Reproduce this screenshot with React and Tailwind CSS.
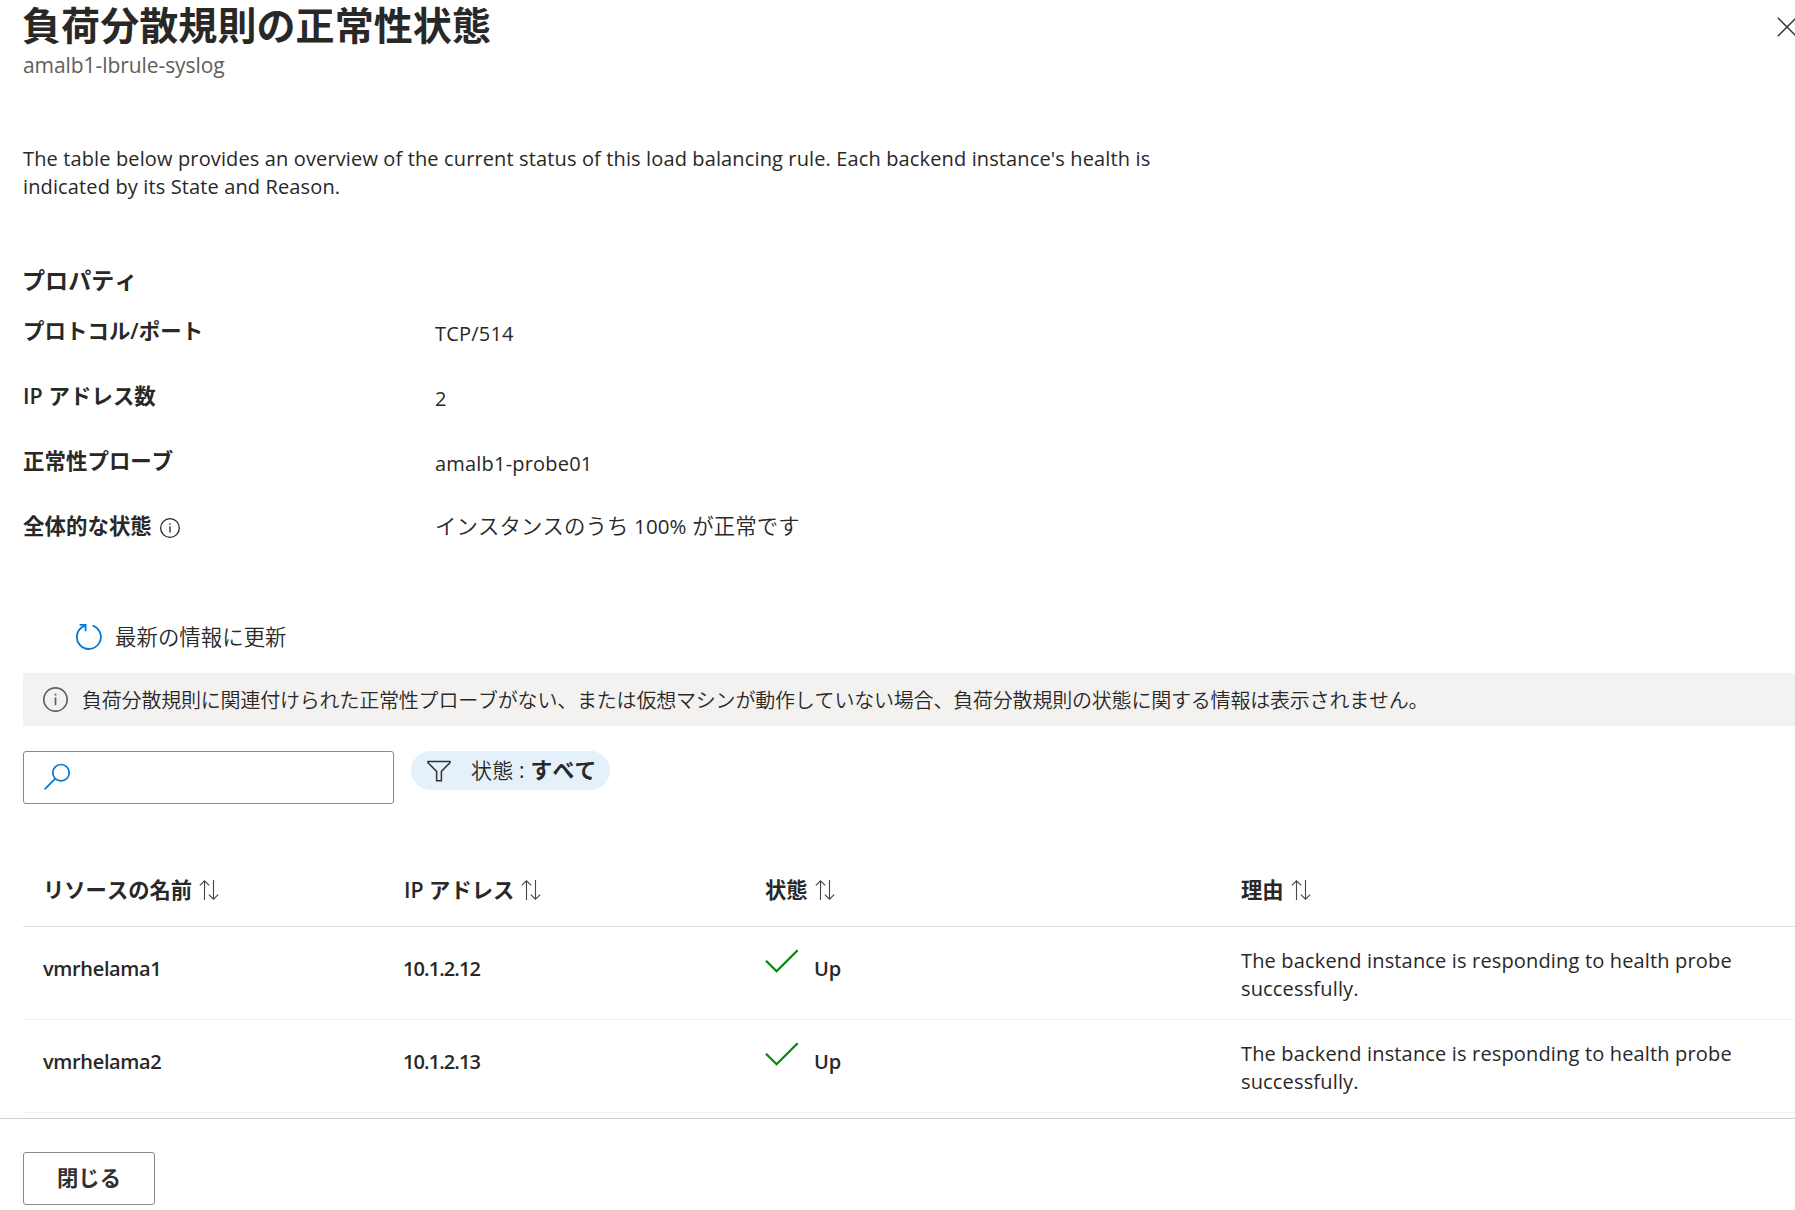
const properties = [
  { label: "プロトコル/ポート", value: "TCP/514" },
  { label: "IP アドレス数", value: "2" },
  { label: "正常性プローブ", value: "amalb1-probe01" },
  {
    label: "全体的な状態",
    value: (
      <>
        インスタンスのうち <span className="text-[20.5px] font-normal">100%</span> が正常です
      </>
    ),
    info: true,
  },
];

const columns = ["リソースの名前", "IP アドレス", "状態", "理由"];

const instances = [
  {
    name: "vmrhelama1",
    ip: "10.1.2.12",
    state: "Up",
    reason: "The backend instance is responding to health probe successfully.",
  },
  {
    name: "vmrhelama2",
    ip: "10.1.2.13",
    state: "Up",
    reason: "The backend instance is responding to health probe successfully.",
  },
];

function CloseIcon() {
  return (
    <svg className="w-5 h-5 shrink-0" viewBox="0 0 20 20" fill="none" stroke="#323130" strokeWidth="1.4">
      <path d="M0.8 0.8l18.4 18.4M19.2 0.8L0.8 19.2" />
    </svg>
  );
}

function InfoIcon({ className }) {
  return (
    <svg className={className} viewBox="0 0 24 24" fill="none" stroke="currentColor" strokeWidth="1.6">
      <circle cx="12" cy="12" r="11.2" />
      <path d="M12 10v7.5" />
      <path d="M12 6.4v1.8" />
    </svg>
  );
}

function RefreshIcon() {
  return (
    <svg className="w-7 h-7 shrink-0" viewBox="0 0 28 28" fill="none" stroke="#0078d4" strokeWidth="1.8">
      <path d="M17.6 2.6A12 12 0 1 1 8.6 3.2" />
      <path d="M4.6 1.9h6v6.4" />
      <path d="M10.2 2.2L8.2 3.8" />
    </svg>
  );
}

function SearchIcon() {
  return (
    <svg className="w-7 h-7" viewBox="0 0 28 28" fill="none" stroke="#0078d4" strokeWidth="1.7">
      <circle cx="18" cy="9.7" r="8.2" />
      <path d="M12.2 15.6L1.6 26.4" />
    </svg>
  );
}

function FilterIcon() {
  return (
    <svg className="w-6 h-[22px] shrink-0" viewBox="0 0 24 22" fill="none" stroke="#323130" strokeWidth="1.5">
      <path d="M1 1.4h22v1.4l-8.6 8.6v9.4H9.6v-9.4L1 2.8z" />
    </svg>
  );
}

function SortIcon() {
  return (
    <svg className="w-5 h-5 shrink-0" viewBox="0 0 20 20" fill="none" stroke="#484644" strokeWidth="1.1">
      <path d="M5.5 20V0.8M0.8 5.4L5.5 0.8l4.7 4.6" />
      <path d="M14.5 0v19.2M9.8 14.6l4.7 4.6 4.7-4.6" />
    </svg>
  );
}

function CheckIcon() {
  return (
    <svg className="w-[34px] h-6 shrink-0" viewBox="0 0 34 24" fill="none" stroke="#0b840b" strokeWidth="2.3">
      <path d="M1 11.8l10.6 10.4L32.6 1.2" />
    </svg>
  );
}

export default function App() {
  return (
    <div className="h-[1210px] overflow-hidden bg-white text-[#292827] text-[20px] leading-7 tracking-[0.13px] [font-kerning:none] font-['Open_Sans','Noto_Sans_CJK_JP',sans-serif]">
      <header className="flex justify-between pl-[23px]">
        <div>
          <h1 className="-ml-px text-[39px] leading-[49px] tracking-[0.08px] font-bold">負荷分散規則の正常性状態</h1>
          <p className="mt-0.5 text-[21px] leading-7 tracking-[-0.07px] text-[#605e5c]">amalb1-lbrule-syslog</p>
        </div>
        <button className="flex w-[18px] h-[37px] items-end overflow-hidden">
          <CloseIcon />
        </button>
      </header>

      <main className="pl-[23px]">
        <p className="mt-[66px] w-[1150px]">
          The table below provides an overview of the current status of this load balancing rule. Each backend
          instance's health is indicated by its State and Reason.
        </p>

        <h2 className="mt-[65px] -ml-px text-[23px] leading-7 tracking-[0.1px] font-bold">プロパティ</h2>
        <dl className="mt-[23px]">
          {properties.map((p) => (
            <div key={p.label} className="flex h-[65px] items-start">
              <dt className="flex w-[412px] items-center gap-2 text-[21.4px] tracking-[0.08px] font-semibold">
                {p.label}
                {p.info && <InfoIcon className="mt-1 w-5 h-5" />}
              </dt>
              <dd className={p.info ? "text-[21.4px] tracking-[0.1px] font-[350]" : "pt-[3px] tracking-[0.2px]"}>
                {p.value}
              </dd>
            </div>
          ))}
        </dl>

        <button className="mt-[46px] ml-[52px] flex items-center gap-3 text-[21.4px] leading-7 tracking-[0.05px] font-[350]">
          <RefreshIcon />
          最新の情報に更新
        </button>

        <div className="mt-[22px] flex h-[53px] items-center gap-[14px] bg-[#f3f2f1] pl-5 text-[#292827] tracking-[-0.2px] font-[350]">
          <InfoIcon className="w-[25px] h-[25px] shrink-0 text-[#605e5c]" />
          <span className="pt-0.5">
            負荷分散規則に関連付けられた正常性プローブがない、または仮想マシンが動作していない場合、負荷分散規則の状態に関する情報は表示されません。
          </span>
        </div>

        <div className="mt-[25px] flex items-start gap-[17px]">
          <div className="flex h-[53px] w-[371px] items-center rounded-[3px] border border-[#8a8886] pb-px pl-[19px]">
            <SearchIcon />
          </div>
          <button className="flex h-[39px] w-[199px] items-center rounded-full bg-[#e4f1fb] pl-4 text-[#292827]">
            <FilterIcon />
            <span className="ml-5 whitespace-pre pb-0.5 text-[21px] leading-7 tracking-[0.2px] font-[350]">
              状態<span className="font-normal"> : </span>
              <b className="text-[21.8px] font-bold">すべて</b>
            </span>
          </button>
        </div>

        <div className="mt-[49px]">
          <div className="grid h-[74px] grid-cols-[361px_361px_476px_1fr] items-center border-b border-[#e1dfdd] pl-5">
            {columns.map((c) => (
              <div key={c} className="flex items-center gap-[7px] text-[21.3px] tracking-[0px] font-semibold">
                {c}
                <SortIcon />
              </div>
            ))}
          </div>
          {instances.map((row) => (
            <div
              key={row.name}
              className="grid h-[93px] grid-cols-[360px_362px_476px_1fr] items-start border-b border-[#f3f2f1] pl-5"
            >
              <div className="pt-7 font-semibold tracking-[-0.35px]">{row.name}</div>
              <div className="pt-7 font-semibold tracking-[-0.9px]">{row.ip}</div>
              <div className="flex items-start gap-[15px] pt-[22px]">
                <CheckIcon />
                <span className="pt-1.5 font-semibold tracking-[-0.1px]">{row.state}</span>
              </div>
              <div className="w-[510px] pt-5 tracking-[0.16px]">{row.reason}</div>
            </div>
          ))}
        </div>
      </main>

      <footer className="mt-[5px] border-t border-[#d2d0ce] pt-[33px] pl-[23px]">
        <button className="flex h-[53px] w-[132px] items-center justify-center rounded-[3px] border border-[#8a8886] pb-px text-[21.3px] tracking-[0px] font-semibold text-[#323130]">
          閉じる
        </button>
      </footer>
    </div>
  );
}
